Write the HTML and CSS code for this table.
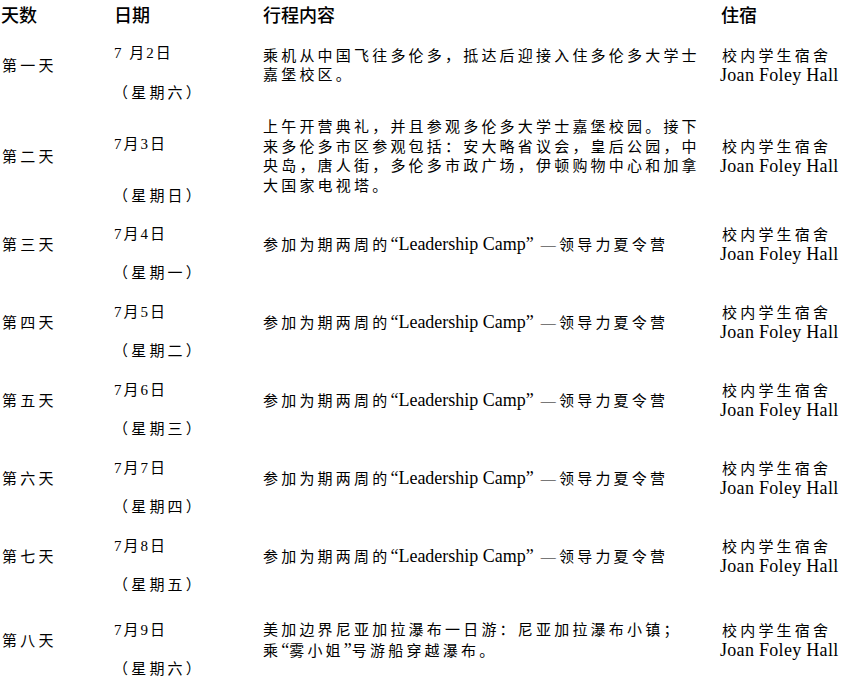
FILE: index.html
```html
<!DOCTYPE html>
<html lang="zh-CN">
<head>
<meta charset="utf-8">
<title>行程</title>
<link rel="stylesheet" href="styles.css">
</head>
<body>
<div class="itinerary">
  <div class="row row--head">
    <div class="cell head head--day">天数</div>
    <div class="cell head head--date">日期</div>
    <div class="cell head">行程内容</div>
    <div class="cell head head--stay">住宿</div>
  </div>

  <div class="row row--first">
    <div class="cell day">第一天</div>
    <div class="cell date"><span class="date__day">7 月2日</span><span class="date__week">（星期六）</span></div>
    <div class="cell plan">乘机从中国飞往多伦多，抵达后迎接入住多伦多大学士嘉堡校区。</div>
    <div class="cell stay"><span class="stay__cn">校内学生宿舍</span><span class="stay__en">Joan Foley Hall</span></div>
  </div>

  <div class="row row--second">
    <div class="cell day">第二天</div>
    <div class="cell date"><span class="date__day">7月3日</span><span class="date__week">（星期日）</span></div>
    <div class="cell plan">上午开营典礼，并且参观多伦多大学士嘉堡校园。接下来多伦多市区参观包括：安大略省议会，皇后公园，中央岛，唐人街，多伦多市政广场，伊顿购物中心和加拿大国家电视塔。</div>
    <div class="cell stay"><span class="stay__cn">校内学生宿舍</span><span class="stay__en">Joan Foley Hall</span></div>
  </div>

  <div class="row">
    <div class="cell day">第三天</div>
    <div class="cell date"><span class="date__day">7月4日</span><span class="date__week">（星期一）</span></div>
    <div class="cell plan">参加为期两周的<span class="latin">“Leadership Camp”</span> —领导力夏令营</div>
    <div class="cell stay"><span class="stay__cn">校内学生宿舍</span><span class="stay__en">Joan Foley Hall</span></div>
  </div>

  <div class="row">
    <div class="cell day">第四天</div>
    <div class="cell date"><span class="date__day">7月5日</span><span class="date__week">（星期二）</span></div>
    <div class="cell plan">参加为期两周的<span class="latin">“Leadership Camp”</span> —领导力夏令营</div>
    <div class="cell stay"><span class="stay__cn">校内学生宿舍</span><span class="stay__en">Joan Foley Hall</span></div>
  </div>

  <div class="row">
    <div class="cell day">第五天</div>
    <div class="cell date"><span class="date__day">7月6日</span><span class="date__week">（星期三）</span></div>
    <div class="cell plan">参加为期两周的<span class="latin">“Leadership Camp”</span> —领导力夏令营</div>
    <div class="cell stay"><span class="stay__cn">校内学生宿舍</span><span class="stay__en">Joan Foley Hall</span></div>
  </div>

  <div class="row">
    <div class="cell day">第六天</div>
    <div class="cell date"><span class="date__day">7月7日</span><span class="date__week">（星期四）</span></div>
    <div class="cell plan">参加为期两周的<span class="latin">“Leadership Camp”</span> —领导力夏令营</div>
    <div class="cell stay"><span class="stay__cn">校内学生宿舍</span><span class="stay__en">Joan Foley Hall</span></div>
  </div>

  <div class="row">
    <div class="cell day">第七天</div>
    <div class="cell date"><span class="date__day">7月8日</span><span class="date__week">（星期五）</span></div>
    <div class="cell plan">参加为期两周的<span class="latin">“Leadership Camp”</span> —领导力夏令营</div>
    <div class="cell stay"><span class="stay__cn">校内学生宿舍</span><span class="stay__en">Joan Foley Hall</span></div>
  </div>

  <div class="row row--last">
    <div class="cell day">第八天</div>
    <div class="cell date"><span class="date__day">7月9日</span><span class="date__week">（星期六）</span></div>
    <div class="cell plan">美加边界尼亚加拉瀑布一日游：尼亚加拉瀑布小镇；<br>乘<span class="latin">“</span>雾小姐<span class="latin">”</span>号游船穿越瀑布。</div>
    <div class="cell stay"><span class="stay__cn">校内学生宿舍</span><span class="stay__en">Joan Foley Hall</span></div>
  </div>
</div>
</body>
</html>
```

FILE: styles.css
```css
html, body {
  margin: 0;
  padding: 0;
  background: #ffffff;
}

body {
  color: #000000;
  font-family: "Liberation Serif", "Noto Sans CJK SC", serif;
  font-size: 15px;
}

.itinerary {
  display: flex;
  flex-direction: column;
  width: 846px;
}

.row {
  display: grid;
  grid-template-columns: 113px 150px 457px 1fr;
  align-items: center;
  height: 78px;
}

.row--head {
  height: 24px;
  font-family: "Noto Sans CJK SC", sans-serif;
  font-size: 18px;
  font-weight: 500;
  line-height: 24px;
}

.row--first { height: 84px; }
.row--second { height: 98px; }
.row--last { height: 90px; }

.head {
  padding-top: 2px;
}

.head--day,
.head--date,
.head--stay {
  padding-left: 1px;
}

.day {
  padding-left: 2px;
  letter-spacing: 3.2px;
  line-height: 20px;
}

.date {
  display: flex;
  flex-direction: column;
  gap: 19px;
  padding-top: 17px;
  line-height: 20px;
}

.row--first .date {
  gap: 20px;
  padding-top: 14px;
}

.row--second .date {
  gap: 32px;
  padding-top: 26px;
}

.date__day {
  padding-left: 1px;
  letter-spacing: 2px;
}

.date__week {
  letter-spacing: 3.2px;
}

.plan {
  letter-spacing: 3.2px;
  line-height: 19.5px;
  padding-right: 14px;
}

.latin {
  font-size: 18px;
  letter-spacing: 0;
}

.stay {
  display: flex;
  flex-direction: column;
  line-height: 19.5px;
}

.stay__cn {
  padding-left: 2px;
  letter-spacing: 3.2px;
}

.stay__en {
  font-size: 18px;
  letter-spacing: 0.3px;
}
```
